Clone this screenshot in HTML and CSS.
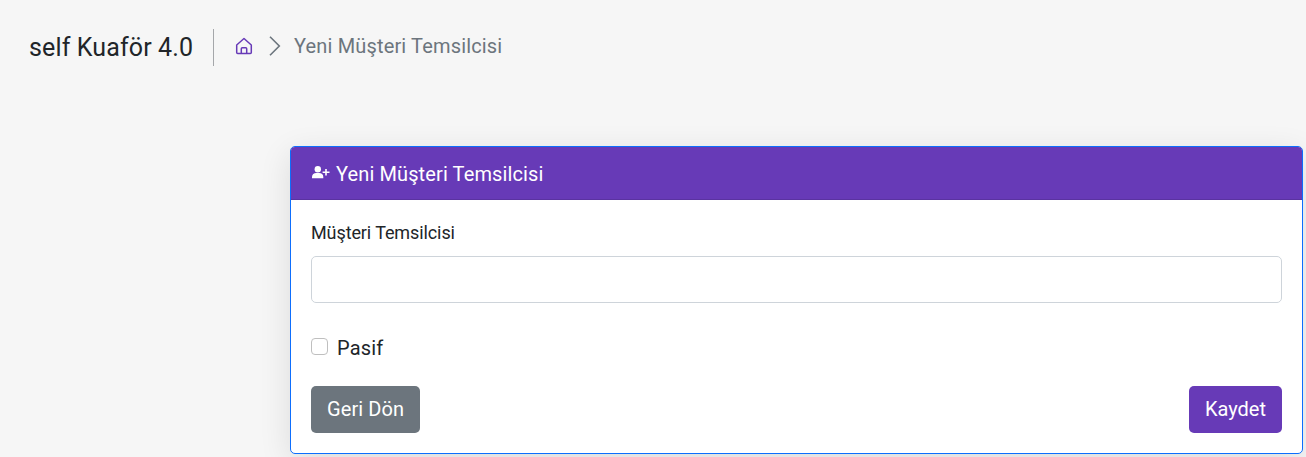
FILE: index.html
```html
<!DOCTYPE html>
<html lang="tr">
<head>
<meta charset="utf-8">
<title>self Kuaför 4.0</title>
<link rel="stylesheet" href="styles.css">
</head>
<body>
<header class="topbar">
  <h1 class="brand">self Kuaför 4.0</h1>
  <nav class="breadcrumb">
    <svg class="home" viewBox="0 0 18 18" fill="none" stroke="currentColor" stroke-width="1.5" stroke-linejoin="round" stroke-linecap="round"><path d="M1.700 8 9 1.500 16.300 8v7.500a1 1 0 0 1-1 1H2.700a1 1 0 0 1-1-1z"/><path d="M6.300 16v-4.300a1 1 0 0 1 1-1h3.400a1 1 0 0 1 1 1V16"/></svg>
    <svg class="chevron" viewBox="0 0 12 20" fill="none" stroke="currentColor" stroke-width="1.6"><path d="M1 .7 10.300 10 1 19.300"/></svg>
    <span>Yeni Müşteri Temsilcisi</span>
  </nav>
</header>
<main class="card">
  <div class="card-header">
    <svg class="user-plus" viewBox="0 0 18 13" fill="currentColor"><circle cx="5.800" cy="3.200" r="3.200"/><path d="M0 12.300V11c0-2.500 2-3.900 4.200-3.900h3C9.500 7.100 11.300 8.500 11.300 11v1.300z"/><path d="M13.200 3h1.600v2.400h2.700V7h-2.700v2.500h-1.600V7h-2.600V5.400h2.600z"/></svg>
    <span>Yeni Müşteri Temsilcisi</span>
  </div>
  <form class="card-body">
    <label class="label" for="rep">Müşteri Temsilcisi</label>
    <input class="field" id="rep" type="text">
    <label class="check"><input class="box" type="checkbox"><span>Pasif</span></label>
    <div class="actions">
      <button class="btn btn-back" type="button">Geri Dön</button>
      <button class="btn btn-save" type="button">Kaydet</button>
    </div>
  </form>
</main>
</body>
</html>
```
FILE: styles.css
```css
* { box-sizing: border-box; }
body {
  margin: 0;
  height: 457px;
  overflow: hidden;
  background: #f6f6f6;
  color: #212529;
  font: 400 20px/30px Roboto, sans-serif;
}
.topbar {
  display: flex;
  align-items: center;
  height: 95px;
  padding-left: 29px;
}
.brand {
  margin: 0;
  width: 185px;
  height: 37px;
  border-right: 1px solid #a5a7aa;
  font-size: 25px;
  font-weight: 400;
  line-height: 37px;
  letter-spacing: .13px;
}
.breadcrumb {
  display: flex;
  align-items: center;
  margin: 0 0 3px 21px;
  color: #6c757d;
  line-height: 28px;
  letter-spacing: .16px;
}
.home { width: 18px; height: 18px; color: #673ab7; }
.chevron { width: 12px; height: 20px; margin: 0 13px 0 16px; }
.card {
  width: 1013px;
  height: 308px;
  margin: 51px 0 0 290px;
  overflow: hidden;
  border: 1px solid #0d6efd;
  border-radius: 5px;
  background: #fff;
  box-shadow: 0 8px 32px rgba(0, 0, 0, .11);
}
.card-header {
  display: flex;
  align-items: center;
  height: 53px;
  padding: 2px 0 0 20px;
  border-bottom: 1px solid #5a33a0;
  background: #673ab7;
  color: #fff;
  letter-spacing: .12px;
}
.user-plus { width: 18px; height: 13px; margin: 0 6px 4px 1px; }
.card-body { padding: 20px; }
.label {
  display: block;
  margin-bottom: 10px;
  font-size: 18px;
  line-height: 26px;
  letter-spacing: -.1px;
}
.field {
  display: block;
  width: 100%;
  height: 47px;
  border: 1px solid #ced4da;
  border-radius: 5px;
  background: #fff;
  font: inherit;
}
.check {
  display: flex;
  align-items: center;
  gap: 9px;
  height: 30px;
  margin: 30px 0 23px;
  letter-spacing: .15px;
}
.box {
  appearance: none;
  width: 17px;
  height: 17px;
  margin: 0 0 3px;
  border: 1px solid #bfbfbf;
  border-radius: 4px;
  background: #fff;
}
.actions { display: flex; justify-content: space-between; }
.btn {
  height: 47px;
  padding: 0 16px 2px;
  border: 0;
  border-radius: 5px;
  color: #fff;
  font: inherit;
}
.btn-back { background: #6c757d; letter-spacing: .1px; }
.btn-save { background: #673ab7; }
```
